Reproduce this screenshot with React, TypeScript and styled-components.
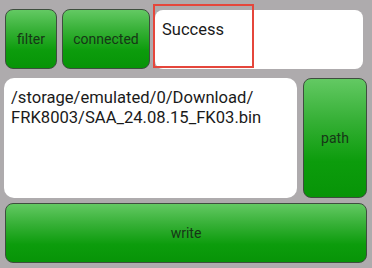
import React from "react";
import styled, { createGlobalStyle } from "styled-components";

const Global = createGlobalStyle`
  html, body { margin: 0; padding: 0; background: #aeabad; }
  body { font-family: Roboto, "Liberation Sans", sans-serif; }
`;

const Page = styled.div`
  width: 372px;
  height: 268px;
  box-sizing: border-box;
  padding: 9px 5px 5px 5px;
  display: flex;
  flex-direction: column;
  gap: 9px;
  background: #aeabad;
`;

const TopRow = styled.div`
  display: flex;
  gap: 5px;
  height: 60px;
`;

const MidRow = styled.div`
  display: flex;
  gap: 6px;
  height: 120px;
  margin-left: -1px;
`;

const GreenButton = styled.button<{ $w?: number; $grow?: boolean }>`
  ${(p) => (p.$grow ? "flex: 1;" : `width: ${p.$w}px; flex: none;`)}
  box-sizing: border-box;
  border: 1.5px solid #3e4e3e;
  border-radius: 8px;
  background: linear-gradient(180deg, #63c963 0%, #36b036 35%, #0c9c0c 70%, #079407 100%);
  color: #163616;
  font-family: Roboto, "Liberation Sans", sans-serif;
  font-size: 14px;
  padding: 0;
  display: flex;
  align-items: center;
  justify-content: center;
`;

const WriteButton = styled(GreenButton)`
  height: 61px;
  margin-top: -4px;
`;

const StatusBox = styled.div`
  position: relative;
  flex: 1;
  margin-top: 1px;
  margin-right: 4px;
  background: #ffffff;
  border-radius: 8px;
  font-size: 16.5px;
  line-height: 20px;
  color: #1a1a1a;
  padding: 10px 7px;
  box-sizing: border-box;
`;

const Highlight = styled.div`
  position: absolute;
  left: -2px;
  top: -6px;
  width: 101px;
  height: 64px;
  border: 2px solid #e5463b;
  box-sizing: border-box;
  pointer-events: none;
`;

const PathBox = styled.div`
  flex: 1;
  background: #ffffff;
  border-radius: 10px;
  font-size: 16.6px;
  line-height: 19.6px;
  color: #1a1a1a;
  padding: 10px 7px;
  box-sizing: border-box;
`;

export default function App() {
  return (
    <>
      <Global />
      <Page>
        <TopRow>
          <GreenButton $w={52}>filter</GreenButton>
          <GreenButton $w={88}>connected</GreenButton>
          <StatusBox>
            Success
            <Highlight />
          </StatusBox>
        </TopRow>
        <MidRow>
          <PathBox>
            /storage/emulated/0/Download/
            <br />
            FRK8003/SAA_24.08.15_FK03.bin
          </PathBox>
          <GreenButton $w={64}>path</GreenButton>
        </MidRow>
        <WriteButton $grow>write</WriteButton>
      </Page>
    </>
  );
}
